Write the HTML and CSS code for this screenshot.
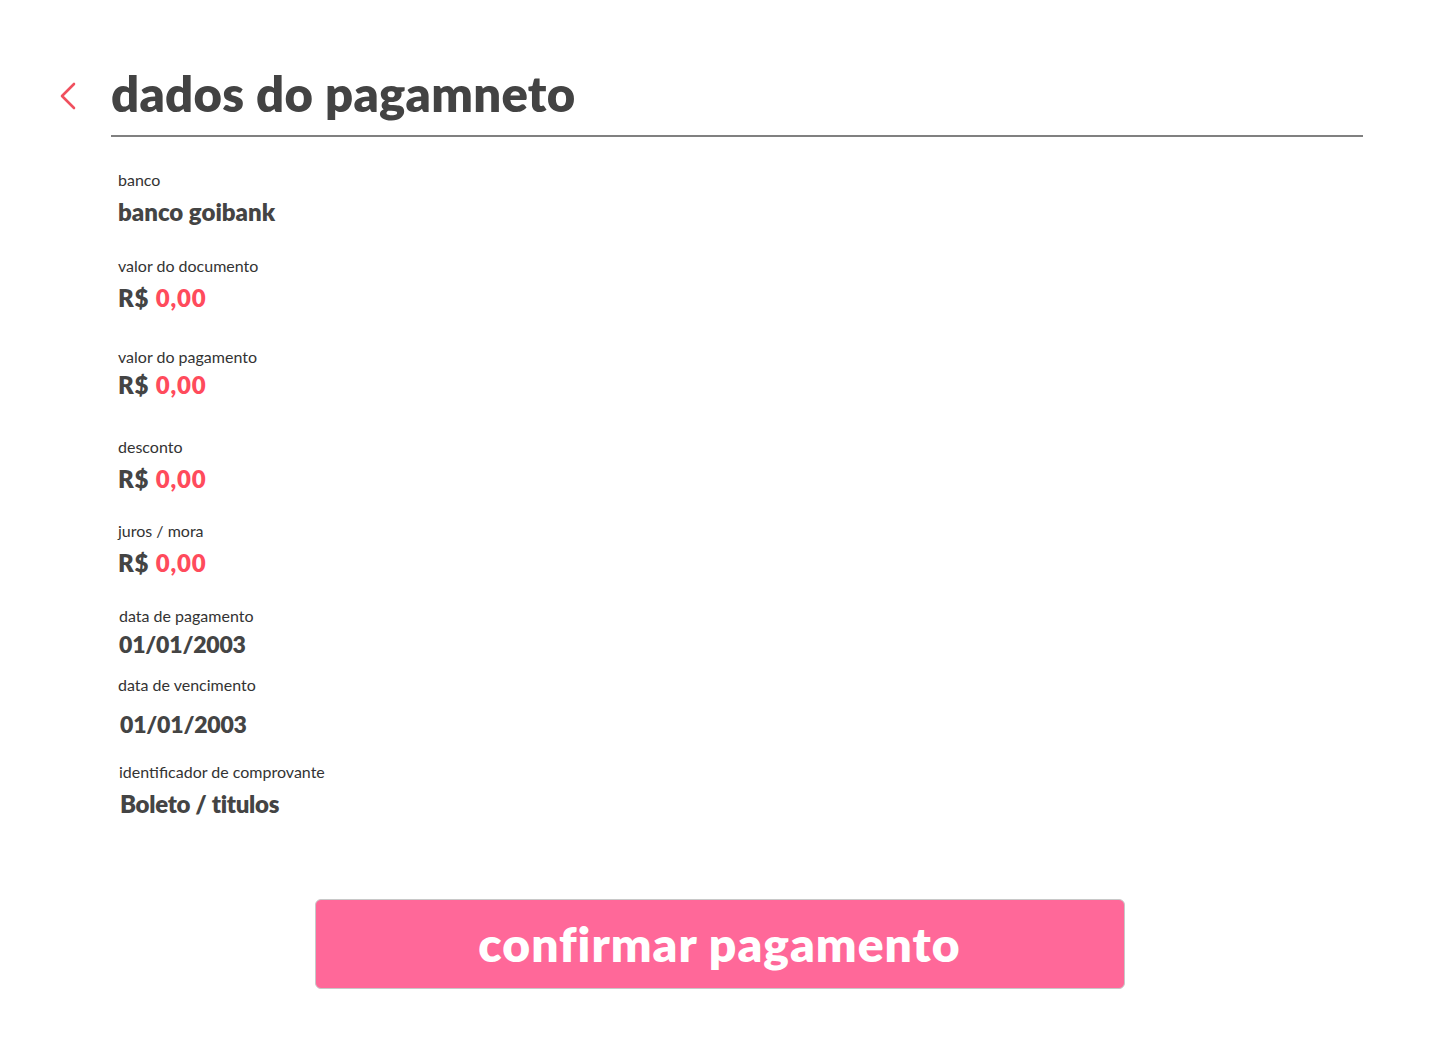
FILE: index.html
```html
<!DOCTYPE html>
<html lang="pt-BR">
<head>
<meta charset="utf-8">
<title>dados do pagamneto</title>
<link rel="stylesheet" href="styles.css">
</head>
<body>
<main class="page">
  <header class="header">
    <button class="back" aria-label="voltar">
      <svg width="18" height="28" viewBox="0 0 18 28" fill="none"><path d="M15 2 L3 14 L15 26" stroke="#f0505e" stroke-width="2.6" stroke-linecap="round" stroke-linejoin="round"/></svg>
    </button>
    <h1 class="title">dados do pagamneto</h1>
  </header>
  <section class="details">
    <div class="field f-banco">
      <div class="label">banco</div>
      <div class="value">banco goibank</div>
    </div>
    <div class="field f-doc">
      <div class="label">valor do documento</div>
      <div class="value money-row">R$ <span class="money">0,00</span></div>
    </div>
    <div class="field f-pag">
      <div class="label">valor do pagamento</div>
      <div class="value money-row tight">R$ <span class="money">0,00</span></div>
    </div>
    <div class="field f-desc">
      <div class="label">desconto</div>
      <div class="value money-row">R$ <span class="money">0,00</span></div>
    </div>
    <div class="field f-juros">
      <div class="label">juros / mora</div>
      <div class="value money-row">R$ <span class="money">0,00</span></div>
    </div>
    <div class="field f-datapag shift">
      <div class="label">data de pagamento</div>
      <div class="value date tight">01/01/2003</div>
    </div>
    <div class="field f-venc">
      <div class="label">data de vencimento</div>
      <div class="value date loose shift2">01/01/2003</div>
    </div>
    <div class="field f-ident shift">
      <div class="label">identificador de comprovante</div>
      <div class="value condensed shift1">Boleto / titulos</div>
    </div>
  </section>
  <div class="actions">
    <button class="confirm">confirmar pagamento</button>
  </div>
</main>
</body>
</html>
```
FILE: styles.css
```css
* { box-sizing: border-box; }
html, body { margin: 0; padding: 0; background: #ffffff; }
body {
  font-family: "Lato", "Inter", "Noto Sans", sans-serif;
  color: #444444;
}
.page {
  width: 1440px;
  height: 1048px;
  padding: 64px 77px 0 59px;
}
.header {
  display: flex;
  align-items: flex-start;
  gap: 34px;
}
.back {
  border: 0;
  background: none;
  padding: 0;
  margin-top: 18px;
  width: 18px;
  height: 28px;
  display: flex;
  cursor: pointer;
}
.title {
  flex: 1;
  margin: 0;
  font-size: 49px;
  font-weight: 800;
  line-height: 58px;
  color: #434343;
  padding-bottom: 13px;
  border-bottom: 2px solid #808080;
  letter-spacing: 0.3px;
}
.details {
  padding-left: 59px;
  padding-top: 33px;
}
.field .label {
  font-size: 16px;
  line-height: 20px;
  color: #333333;
}
.field .value {
  font-size: 24px;
  line-height: 28px;
  font-weight: 800;
  color: #444444;
  margin-top: 8px;
}
.value.money-row { letter-spacing: 0.8px; }
.value.date { font-size: 23px; letter-spacing: -0.2px; }
.value.condensed { letter-spacing: -0.3px; }
.value.tight { margin-top: 4px; }
.value.loose { margin-top: 15px; }
.money { color: #ff4b5c; }
.f-doc { margin-top: 30px; }
.f-pag { margin-top: 35px; }
.f-desc { margin-top: 38px; }
.f-juros { margin-top: 28px; }
.f-datapag { margin-top: 29px; }
.f-venc { margin-top: 17px; }
.f-ident { margin-top: 24px; }
.shift { padding-left: 1px; }
.shift1 { padding-left: 1px; }
.shift2 { padding-left: 2px; }
.actions {
  display: flex;
  justify-content: center;
  padding-left: 17px;
  margin-top: 81px;
}
.confirm {
  width: 810px;
  height: 90px;
  background: #ff6899;
  border: 1px solid #c8c8c8;
  border-radius: 6px;
  color: #ffffff;
  font-family: "Lato", "Inter", sans-serif;
  font-size: 48px;
  font-weight: 800;
  letter-spacing: 1px;
  cursor: pointer;
  padding: 0 0 2px;
}
```
